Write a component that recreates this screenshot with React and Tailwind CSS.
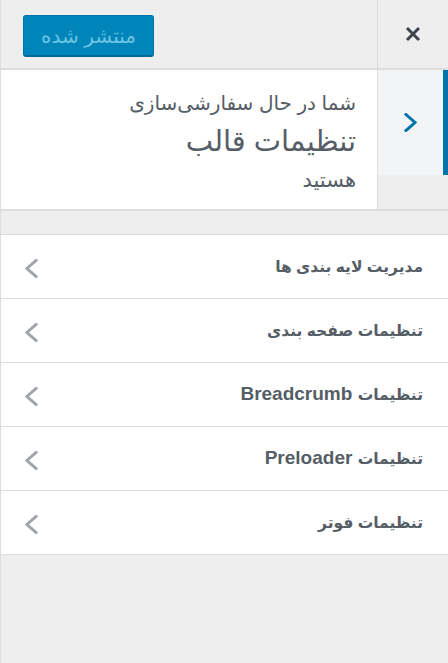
const sections = [
    { fa: "مدیریت لایه بندی ها" },
    { fa: "تنظیمات صفحه بندی" },
    { fa: "تنظیمات", en: "Breadcrumb" },
    { fa: "تنظیمات", en: "Preloader" },
    { fa: "تنظیمات فوتر" },
];

function Chevron({ dir, className }) {
    const points = dir === "left" ? "11,1.5 2,9.5 11,17.5" : "2,1.5 11,9.5 2,17.5";
    return (
        <svg width="13" height="19" viewBox="0 0 13 19" className={className}>
            <polyline
                points={points}
                fill="none"
                stroke="currentColor"
                strokeWidth="3"
                strokeLinecap="square"
            />
        </svg>
    );
}

export default function App() {
    return (
        <div
            dir="rtl"
            className="min-h-screen bg-[#eeeeee] border-l border-[#dddddd] text-[#555d66]"
            style={{ fontFamily: '"Liberation Sans", "DejaVu Sans", sans-serif' }}
        >
            {/* header */}
            <div className="flex h-[70px] border-b-2 border-[#dddddd]">
                <button className="w-[71px] shrink-0 flex items-center justify-center border-l border-[#dddddd] text-[#3c434a]">
                    <svg width="16" height="16" viewBox="0 0 16 16">
                        <path d="M2 2 L14 14 M14 2 L2 14" stroke="currentColor" strokeWidth="3" />
                    </svg>
                </button>
                <div className="flex-1 flex justify-end items-start pl-[22px] pt-[15px]">
                    <button className="w-[131px] h-[42px] rounded-[3px] bg-[#0085ba] border border-[#0073aa] border-b-2 border-b-[#006799] text-[#6cc4e2] text-[20px] leading-none">
                        منتشر شده
                    </button>
                </div>
            </div>

            {/* info */}
            <div className="flex h-[141px] border-b-2 border-[#dddddd]">
                <div className="w-[71px] shrink-0 border-l border-[#dddddd]">
                    <button className="w-full h-[105px] bg-[#f3f4f5] border-r-[5px] border-[#0073aa] flex items-center justify-center text-[#0073aa]">
                        <Chevron dir="right" />
                    </button>
                </div>
                <div className="flex-1 bg-white pr-[21px] pt-[20px]">
                    <div className="text-[20px] leading-[26px]">
                        شما در حال سفارشی‌سازی
                    </div>
                    <div className="text-[29px] leading-[38px] mt-[6px]">
                        تنظیمات قالب
                    </div>
                    <div className="text-[21px] leading-[26px] mt-[7px]">
                        هستید
                    </div>
                </div>
            </div>

            {/* sections */}
            <div className="mt-[23px] border-b border-[#dddddd]">
                {sections.map((s) => (
                    <div
                        key={s.fa + (s.en || "")}
                        className="h-[64px] bg-white border-t border-[#dddddd] flex items-center justify-between pr-[25px] pl-[24px]"
                    >
                        <span className="font-bold">
                            <span className="text-[15.5px]">{s.fa}</span>
                            {s.en && (
                                <span className="text-[19px]"> {s.en}</span>
                            )}
                        </span>
                        <Chevron dir="left" className="text-[#a0a5aa] mt-[3px]" />
                    </div>
                ))}
            </div>
        </div>
    );
}
